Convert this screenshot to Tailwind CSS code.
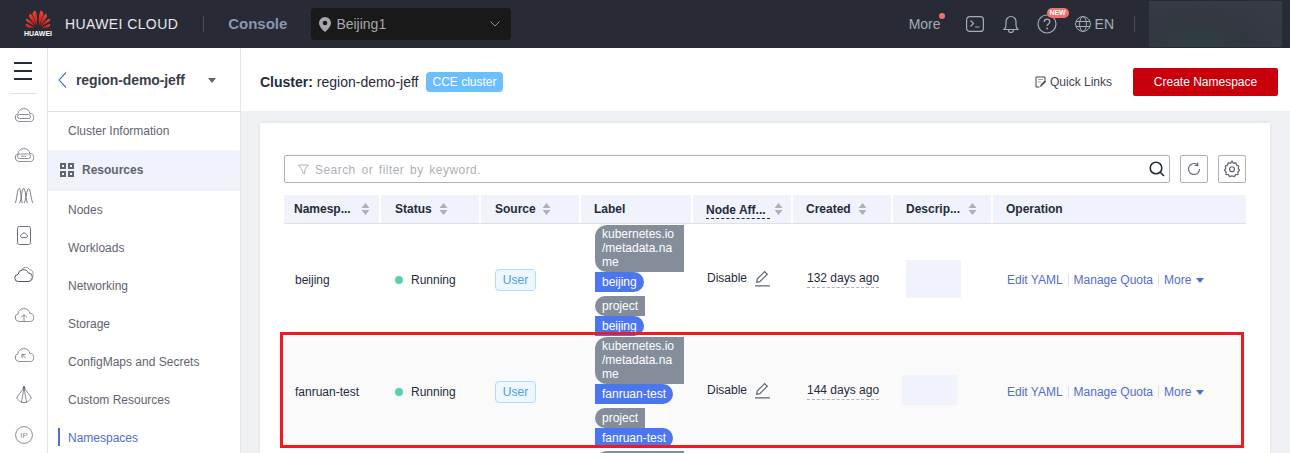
<!DOCTYPE html>
<html lang="en">
<head>
    <meta charset="UTF-8">
    <title>Namespaces</title>
    <script src="https://cdn.jsdelivr.net/npm/@tailwindcss/browser@4"></script>
</head>
<body class="h-[453px] w-[1290px] overflow-hidden relative flex flex-col font-['Liberation_Sans',Arial,sans-serif] text-[12px] text-[#252b3a] bg-[#f0f1f5]">

    <!-- top nav -->
    <header class="h-12 shrink-0 bg-[#282b36] flex items-center">
        <div class="ml-[25px] w-[26px] flex flex-col items-center">
            <svg width="26" height="19" viewBox="0 0 26 19">
                <defs><linearGradient id="petal" x1="0" y1="0" x2="0" y2="1"><stop offset="0" stop-color="#ee4a35"/><stop offset="1" stop-color="#b5121b"/></linearGradient></defs>
                <g fill="url(#petal)">
                    <path d="M11.8 15.5 7.6 4.8 C7.2 3 8.4 1.2 10 .6 C11.6 2.4 12.8 8 11.8 15.5Z"/>
                    <path d="M14.2 15.5 18.4 4.8 C18.8 3 17.6 1.2 16 .6 C14.4 2.4 13.2 8 14.2 15.5Z"/>
                    <path d="M10.6 16 4.4 7.4 C3.6 6.4 4 4.6 5 3.6 C7 4.8 10 10 10.6 16Z"/>
                    <path d="M15.4 16 21.6 7.4 C22.4 6.4 22 4.6 21 3.6 C19 4.8 16 10 15.4 16Z"/>
                    <path d="M9.6 16.6 1.8 11.6 C1 11 .8 9.6 1.2 8.6 C4 9.6 8 13 9.6 16.6Z"/>
                    <path d="M16.4 16.6 24.2 11.6 C25 11 25.2 9.6 24.8 8.6 C22 9.6 18 13 16.4 16.6Z"/>
                    <path d="M9 18 H3.4 C2 18 .8 16 .6 14 C3.6 14.6 7 16.2 9 18Z"/>
                    <path d="M17 18 H22.6 C24 18 25.2 16 25.4 14 C22.4 14.6 19 16.2 17 18Z"/>
                </g>
            </svg>
            <span class="text-[7px] leading-[8px] font-bold text-white mt-[1px]">HUAWEI</span>
        </div>
        <span class="ml-[14px] text-[14px] tracking-[.4px] text-[#e8e8ea]">HUAWEI CLOUD</span>
        <span class="ml-[25px] w-px h-4 bg-[#4b4e58]"></span>
        <span class="ml-[24px] text-[15px] font-bold text-[#8a97ad]">Console</span>
        <div class="ml-[24px] w-[200px] h-8 bg-[#191919] rounded-[4px] flex items-center px-2 text-[14px] text-[#a6a8ad]">
            <svg width="12" height="15" viewBox="0 0 12 15"><path fill="#a6a8ad" fill-rule="evenodd" d="M6 0a6 6 0 0 1 6 6c0 3.5-3.6 7-6 9-2.4-2-6-5.500-6-9a6 6 0 0 1 6-6Zm0 3.700a2.300 2.300 0 1 0 0 4.600 2.300 2.300 0 0 0 0-4.600Z"/></svg>
            <span class="ml-[5px]">Beijing1</span>
            <svg class="ml-auto mr-[3px]" width="10" height="6" viewBox="0 0 10 6"><path fill="none" stroke="#8f9197" d="M.5.5 5 5 9.500.5"/></svg>
        </div>
        <div class="ml-auto flex items-center text-[#a6abb5]">
            <span class="relative text-[14px]">More<span class="absolute right-[-4px] top-[-1px] w-[6px] h-[6px] rounded-full bg-[#f66f6a]"></span></span>
            <svg class="ml-[25px]" width="18" height="16" viewBox="0 0 18 16"><rect x=".6" y=".6" width="16.800" height="14.800" rx="3" fill="none" stroke="#a6abb5" stroke-width="1.200"/><path d="M4.500 4.500 7.500 7.500 4.500 10.500M9 11h4.500" fill="none" stroke="#a6abb5" stroke-width="1.200"/></svg>
            <svg class="ml-[19px]" width="16" height="19" viewBox="0 0 16 19"><path d="M1 14.500c1.500-1 2-2.500 2-4.500V6.500a5 5 0 0 1 10 0V10c0 2 .5 3.500 2 4.500ZM5.500 15a2.500 2.500 0 0 0 5 0" fill="none" stroke="#a6abb5" stroke-width="1.200"/></svg>
            <div class="relative ml-[18px] w-5 h-5">
                <svg width="20" height="20" viewBox="0 0 20 20"><circle cx="10" cy="10" r="9" fill="none" stroke="#a6abb5" stroke-width="1.200"/><path d="M7.300 8c0-1.700 1.200-2.800 2.800-2.800S12.800 6.300 12.800 7.800c0 2-2.700 2.200-2.700 4.200" fill="none" stroke="#a6abb5" stroke-width="1.300"/><circle cx="10.100" cy="14.500" r=".9" fill="#a6abb5"/></svg>
                <span class="absolute left-[10px] top-[-6px] w-[22px] h-[10px] rounded-[5px] bg-[#f66f6a] text-white text-[7px] leading-[10px] font-bold text-center">NEW</span>
            </div>
            <svg class="ml-[18px]" width="16" height="16" viewBox="0 0 16 16"><g fill="none" stroke="#a6abb5"><circle cx="8" cy="8" r="7.400"/><ellipse cx="8" cy="8" rx="3.400" ry="7.400"/><path d="M1 5.500h14M1 10.500h14"/></g></svg>
            <span class="ml-1 text-[14px]">EN</span>
            <span class="ml-5 w-px h-4 bg-[#4b4e58]"></span>
            <div class="ml-[14px] mr-2 w-[133px] h-[46px] bg-[radial-gradient(ellipse_at_35%_100%,#2e4040_0%,#33373f_45%,#383c46_100%)]"></div>
        </div>
    </header>

    <div class="flex flex-1 min-h-0">
        <!-- icon rail -->
        <nav class="w-12 shrink-0 bg-white border-r border-[#e4e5ea] flex flex-col items-center">
            <div class="w-[27px] h-[46px] border-b border-[#dfe1e6] flex flex-col justify-center items-center gap-[6px] shrink-0">
                <span class="w-[18px] h-[2px] bg-[#252b3a] mr-px"></span>
                <span class="w-[18px] h-[2px] bg-[#252b3a] mr-px"></span>
                <span class="w-[18px] h-[2px] bg-[#252b3a] mr-px"></span>
            </div>
            <div class="mt-[1px] flex flex-col items-center">
                <div class="h-10 flex items-center"><svg width="20" height="16" viewBox="0 0 20 16" fill="none" stroke="#7d818b" stroke-width=".9"><path d="M5 14.500a4 4 0 0 1-1-7.800 6 6 0 0 1 11.800-.3A4 4 0 0 1 15.500 14.500Z"/><rect x="3.500" y="7.500" width="13" height="4" rx="2"/></svg></div>
                <div class="h-10 flex items-center"><svg width="20" height="16" viewBox="0 0 20 16" fill="none" stroke="#7d818b" stroke-width=".9"><path d="M5 14.500a4 4 0 0 1-1-7.800 6 6 0 0 1 11.800-.3A4 4 0 0 1 15.500 14.500Z"/><rect x="3.500" y="7" width="13" height="4.500" rx="2"/><path d="M7 9.200h5"/></svg></div>
                <div class="h-10 flex items-center"><svg width="20" height="17" viewBox="0 0 20 17" fill="none" stroke="#6b6f7a" stroke-width=".9"><path d="M1 16C3 14 3 2 5 1.500S7 14 8.500 16M5.500 16C7.500 14 7.500 2 9.500 1.500S12 14 13.500 16M10 16C12 14 12.500 2 14.500 1.500S17 14 19 16"/></svg></div>
                <div class="h-10 flex items-center"><svg width="14" height="19" viewBox="0 0 14 19" fill="none" stroke="#6b6f7a"><rect x=".5" y=".5" width="13" height="18" rx="2"/><path d="M4.500 11.500a1.600 1.600 0 0 1 .3-3 2.400 2.400 0 0 1 4.500 0 1.600 1.600 0 0 1 .2 3Z"/></svg></div>
                <div class="h-10 flex items-center"><svg width="20" height="16" viewBox="0 0 20 16" fill="none" stroke="#4f5360"><path d="M4.500 14.500a3.500 3.500 0 0 1-.5-7 5.500 5.500 0 0 1 10.500-1.500 4.300 4.300 0 0 1 .5 8.500Z"/><path d="M7.500 3a4.500 4.500 0 0 1 8-.5 4 4 0 0 1 3.500 5 3.500 3.500 0 0 1-2.500 4.500" stroke="#9a9da6"/></svg></div>
                <div class="h-10 flex items-center"><svg width="20" height="16" viewBox="0 0 20 16" fill="none" stroke="#7d818b" stroke-width=".9"><path d="M5 14.500a4 4 0 0 1-1-7.800 6 6 0 0 1 11.800-.3A4 4 0 0 1 15.500 14.500Z"/><path d="M10 14V8M7 10.500l3-3 3 3"/></svg></div>
                <div class="h-10 flex items-center"><svg width="20" height="16" viewBox="0 0 20 16" fill="none" stroke="#7d818b" stroke-width=".9"><path d="M5 14.500a4 4 0 0 1-1-7.800 6 6 0 0 1 11.800-.3A4 4 0 0 1 15.500 14.500Z"/><path d="M8 11V7.500h3.500M8 7.500l3.500 3.500"/></svg></div>
                <div class="h-10 flex items-center"><svg width="18" height="19" viewBox="0 0 18 19" fill="none" stroke="#6b6f7a" stroke-width=".8"><path d="M9 1.500 1.500 12 6 16.500h6l4.500-4.500ZM9 1.500 6.500 16M9 1.500 11.500 16"/><circle cx="9" cy="1.500" r="1" fill="#4f5360"/></svg></div>
                <div class="h-10 flex items-center"><svg width="18" height="18" viewBox="0 0 18 18"><circle cx="9" cy="9" r="8.400" fill="none" stroke="#8a8d96"/><text x="9" y="12" text-anchor="middle" font-size="8" fill="#8a8d96" font-family="Liberation Sans">IP</text></svg></div>
            </div>
        </nav>

        <!-- sidebar -->
        <aside class="w-[193px] shrink-0 bg-white border-r border-[#e4e5ea] text-[#5f6470] flex flex-col">
            <div class="h-[64px] shrink-0 border-b border-[#dfe1e6] flex items-center pt-px">
                <svg class="ml-[10px]" width="9" height="16" viewBox="0 0 9 16"><path d="M8 .5 1 8l7 7.500" fill="none" stroke="#526ecc" stroke-width="1.100"/></svg>
                <span class="ml-[9px] text-[14px] font-bold text-[#3a3f4b] tracking-[-.1px]">region-demo-jeff</span>
                <span class="ml-[23px] w-0 h-0 border-x-[4px] border-x-transparent border-t-[5px] border-t-[#5f6470]"></span>
            </div>
            <a class="h-[38px] shrink-0 flex items-center pl-5">Cluster Information</a>
            <div class="h-[41px] shrink-0 bg-[#f0f3fb] flex items-center pl-[12px] pb-px font-bold text-[#5f6470]">
                <span class="grid grid-cols-2 gap-[2px] w-[14px]">
                    <span class="w-[6px] h-[6px] border-2 border-[#5f6470]"></span><span class="w-[6px] h-[6px] border-2 border-[#5f6470]"></span>
                    <span class="w-[6px] h-[6px] border-2 border-[#5f6470]"></span><span class="w-[6px] h-[6px] border-2 border-[#5f6470]"></span>
                </span>
                <span class="ml-2">Resources</span>
            </div>
            <a class="h-[38px] shrink-0 flex items-center pl-5">Nodes</a>
            <a class="h-[38px] shrink-0 flex items-center pl-5">Workloads</a>
            <a class="h-[38px] shrink-0 flex items-center pl-5">Networking</a>
            <a class="h-[38px] shrink-0 flex items-center pl-5">Storage</a>
            <a class="h-[38px] shrink-0 flex items-center pl-5">ConfigMaps and Secrets</a>
            <a class="h-[38px] shrink-0 flex items-center pl-5">Custom Resources</a>
            <a class="h-[38px] shrink-0 flex items-center pl-5 text-[#526ecc] relative"><span class="absolute left-[10px] top-[9px] w-[2px] h-[18px] bg-[#526ecc]"></span>Namespaces</a>
        </aside>

        <!-- content -->
        <main class="flex-1 min-w-0 flex flex-col">
            <div class="h-[63px] shrink-0 bg-white flex items-center pl-[19px] pr-3 pt-[5px]">
                <span class="text-[14px]"><b class="font-bold">Cluster:</b> region-demo-jeff</span>
                <span class="ml-2 h-5 px-[6px] rounded-[4px] bg-[#6cbfff] text-white flex items-center">CCE cluster</span>
                <svg class="ml-auto" width="11" height="12" viewBox="0 0 11 12"><path d="M10 4.500V1H1v10h3.500" fill="none" stroke="#444"/><path d="M3 3.500h5M3 6h3M5.500 11l.5-2.500L10 4.500l1 1-4 4Z" fill="#444" stroke="#444" stroke-width=".5"/></svg>
                <span class="ml-[4px] text-[#3f4450]">Quick Links</span>
                <button class="ml-[21px] w-[145px] h-7 bg-[#c7000b] rounded-[2px] text-white">Create Namespace</button>
            </div>

            <section class="mt-3 ml-[19px] mr-[20px] flex-1 min-h-0 bg-white shadow-[0_0_4px_rgba(0,0,0,.08)] px-6 pt-8 overflow-hidden">
                <!-- search row -->
                <div class="flex items-center gap-[10px]">
                    <div class="flex-1 h-[28px] border border-[#adb0b8] rounded-[2px] flex items-center pl-[13px] pr-[4px] bg-white">
                        <svg width="11" height="11" viewBox="0 0 11 11"><path d="M.5 1h10L6.800 5.500V10L4.200 8.500v-3Z" fill="none" stroke="#adb0b8"/></svg>
                        <span class="ml-[6px] pt-px text-[#adb0b8] tracking-[.45px] [word-spacing:2px]">Search or filter by keyword.</span>
                        <svg class="ml-auto" width="16" height="16" viewBox="0 0 16 16"><circle cx="7" cy="7" r="5.800" fill="none" stroke="#252b3a" stroke-width="1.600"/><path d="m11 11 4 4" stroke="#252b3a" stroke-width="1.600"/></svg>
                    </div>
                    <div class="w-7 h-7 border border-[#adb0b8] rounded-[2px] flex items-center justify-center">
                        <svg width="14" height="14" viewBox="0 0 14 14"><path d="M12.500 7A5.500 5.500 0 1 1 10.500 2.800M10.800 .5v3h-3" fill="none" stroke="#5f6470" stroke-width="1.100"/></svg>
                    </div>
                    <div class="w-7 h-7 border border-[#adb0b8] rounded-[2px] flex items-center justify-center">
                        <svg width="18" height="18" viewBox="0 0 16 16"><path d="M8 1l1.200 1.800 2.100-.3.7 2 2 .8-.5 2.100L14.800 9l-1.500 1.500.1 2.200-2.100.3L10 14.800l-2-.8-2 .8-1.300-1.800-2.100-.3.1-2.200L1.200 9l1.300-1.600L2 5.300l2-.8.7-2 2.100.3Z" fill="none" stroke="#5f6470" stroke-width="1.100" stroke-linejoin="round"/><circle cx="8" cy="8.200" r="2.200" fill="none" stroke="#5f6470" stroke-width="1.100"/></svg>
                    </div>
                </div>

                <!-- table head -->
                <div class="mt-3 h-[29px] grid grid-cols-[97px_100px_100px_112px_100px_100px_100px_253px] bg-[#f0f3fb] border-b border-[#dfe1e6] font-bold">
                    <div class="flex items-center pl-[10px] border-r-2 border-white">Namesp...<svg class="ml-[10px]" width="9" height="12" viewBox="0 0 9 12"><path d="M4.500 0 8.500 5h-8ZM4.500 12 .5 7h8Z" fill="#adb0b8"/></svg></div>
                    <div class="flex items-center pl-[14px] border-r-2 border-white">Status<svg class="ml-[7px]" width="9" height="12" viewBox="0 0 9 12"><path d="M4.500 0 8.500 5h-8ZM4.500 12 .5 7h8Z" fill="#adb0b8"/></svg></div>
                    <div class="flex items-center pl-[14px] border-r-2 border-white">Source<svg class="ml-[6px]" width="9" height="12" viewBox="0 0 9 12"><path d="M4.500 0 8.500 5h-8ZM4.500 12 .5 7h8Z" fill="#adb0b8"/></svg></div>
                    <div class="flex items-center pl-[13px] border-r-2 border-white">Label</div>
                    <div class="flex items-center pl-[13px] border-r-2 border-white"><span class="border-b border-dashed border-[#252b3a] leading-[15px] mt-[3px] w-[64px] whitespace-nowrap">Node Aff...</span><svg class="ml-[4px]" width="9" height="12" viewBox="0 0 9 12"><path d="M4.500 0 8.500 5h-8ZM4.500 12 .5 7h8Z" fill="#adb0b8"/></svg></div>
                    <div class="flex items-center pl-[13px] border-r-2 border-white">Created<svg class="ml-[7px]" width="9" height="12" viewBox="0 0 9 12"><path d="M4.500 0 8.500 5h-8ZM4.500 12 .5 7h8Z" fill="#adb0b8"/></svg></div>
                    <div class="flex items-center pl-[13px] border-r-2 border-white">Descrip...<svg class="ml-[8px]" width="9" height="12" viewBox="0 0 9 12"><path d="M4.500 0 8.500 5h-8ZM4.500 12 .5 7h8Z" fill="#adb0b8"/></svg></div>
                    <div class="flex items-center pl-[13px]">Operation</div>
                </div>

                <!-- row 1 -->
                <div class="h-[112px] grid grid-cols-[97px_100px_100px_112px_100px_100px_100px_253px] items-center overflow-hidden">
                    <div class="pl-[11px]">beijing</div>
                    <div class="pl-[14px] flex items-center"><span class="w-2 h-2 rounded-full bg-[#50d4ab]"></span><span class="ml-2">Running</span></div>
                    <div class="pl-[14px]"><span class="inline-block h-[22px] w-[41px] leading-[20px] text-center border border-[#b3dbff] bg-[#edf7ff] text-[#4c9ee8] rounded-[4px]">User</span></div>
                    <div class="pl-[14px] self-start pt-px flex flex-col items-start text-white">
                        <span class="w-[89px] pl-[7px] pt-[2px] pb-[3px] leading-[14px] bg-[#838e9a] rounded-l-[12px]">kubernetes.io<br>/metadata.na<br>me</span>
                        <span class="h-5 leading-5 px-[7px] bg-[#4c76ee] rounded-r-[10px]">beijing</span>
                        <span class="mt-1 h-5 leading-5 px-[7px] bg-[#838e9a] rounded-l-[10px]">project</span>
                        <span class="h-5 leading-5 px-[7px] bg-[#4c76ee] rounded-r-[10px]">beijing</span>
                    </div>
                    <div class="pl-[14px] flex items-center mt-[-4px]">Disable<svg class="ml-[8px]" width="15" height="17" viewBox="0 0 14 16"><path d="M1.500 11.500 2 8.500 9 1.500l2.500 2.500-7 7ZM0 15h14" fill="none" stroke="#5f6470" stroke-width="1.100"/></svg></div>
                    <div class="pl-[14px] mt-[-3px]"><span class="inline-block leading-[18px] border-b border-dashed border-[#adb0b8]">132 days ago</span></div>
                    <div class="pl-[13px]"><div class="w-[55px] h-[38px] bg-[#f0f3fb] mt-[-2px]"></div></div>
                    <div class="pl-[14px] flex items-center text-[#526ecc]">Edit YAML<span class="mx-[5px] w-px h-3 bg-[#dfe1e6]"></span>Manage Quota<span class="mx-[5px] w-px h-3 bg-[#dfe1e6]"></span>More<span class="ml-[5px] w-0 h-0 border-x-[4px] border-x-transparent border-t-[5px] border-t-[#526ecc]"></span></div>
                </div>

                <!-- row 2 -->
                <div class="h-[112px] grid grid-cols-[97px_100px_100px_112px_100px_100px_100px_253px] items-center overflow-hidden bg-[#fafafa]">
                    <div class="pl-[11px]">fanruan-test</div>
                    <div class="pl-[14px] flex items-center"><span class="w-2 h-2 rounded-full bg-[#50d4ab]"></span><span class="ml-2">Running</span></div>
                    <div class="pl-[14px]"><span class="inline-block h-[22px] w-[41px] leading-[20px] text-center border border-[#b3dbff] bg-[#edf7ff] text-[#4c9ee8] rounded-[4px]">User</span></div>
                    <div class="pl-[14px] self-start pt-px flex flex-col items-start text-white">
                        <span class="w-[89px] pl-[7px] pt-[2px] pb-[3px] leading-[14px] bg-[#838e9a] rounded-l-[12px]">kubernetes.io<br>/metadata.na<br>me</span>
                        <span class="h-5 leading-5 px-[7px] bg-[#4c76ee] rounded-r-[10px]">fanruan-test</span>
                        <span class="mt-1 h-5 leading-5 px-[7px] bg-[#838e9a] rounded-l-[10px]">project</span>
                        <span class="h-5 leading-5 px-[7px] bg-[#4c76ee] rounded-r-[10px]">fanruan-test</span>
                    </div>
                    <div class="pl-[14px] flex items-center mt-[-4px]">Disable<svg class="ml-[8px]" width="15" height="17" viewBox="0 0 14 16"><path d="M1.500 11.500 2 8.500 9 1.500l2.500 2.500-7 7ZM0 15h14" fill="none" stroke="#5f6470" stroke-width="1.100"/></svg></div>
                    <div class="pl-[14px] mt-[-3px]"><span class="inline-block leading-[18px] border-b border-dashed border-[#adb0b8]">144 days ago</span></div>
                    <div class="pl-[9px]"><div class="w-[55px] h-[30px] bg-[#f0f3fb] mt-[-4px]"></div></div>
                    <div class="pl-[14px] flex items-center text-[#526ecc]">Edit YAML<span class="mx-[5px] w-px h-3 bg-[#dfe1e6]"></span>Manage Quota<span class="mx-[5px] w-px h-3 bg-[#dfe1e6]"></span>More<span class="ml-[5px] w-0 h-0 border-x-[4px] border-x-transparent border-t-[5px] border-t-[#526ecc]"></span></div>
                </div>

                <!-- row 3, cut off by the window -->
                <div class="grid grid-cols-[97px_100px_100px_112px_100px_100px_100px_253px] pt-[3px]">
                    <div class="col-start-4 ml-[14px] w-[89px] h-10 bg-[#838e9a] rounded-l-[12px]"></div>
                </div>
            </section>
        </main>
    </div>

    <!-- red highlight drawn over the row -->
    <div class="absolute left-[280px] top-[332px] w-[964px] h-[116px] border-[3px] border-[#ed1c24]"></div>
</body>
</html>
